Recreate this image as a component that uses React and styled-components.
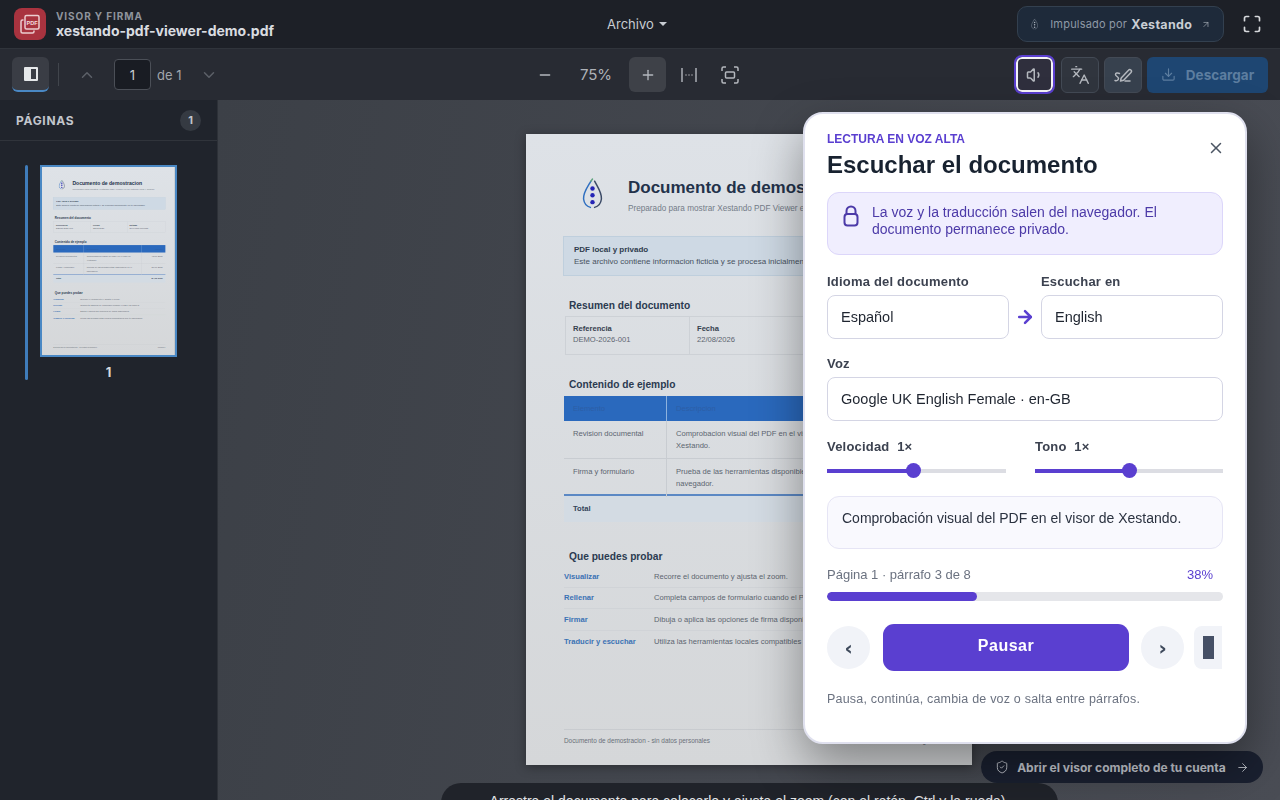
import React from 'react';
import styled, { createGlobalStyle } from 'styled-components';
import { ArrowRight, ArrowUpRight, ChevronDown, ChevronUp, Download, Languages, Maximize, Minus, Plus, ShieldCheck, Volume1, X } from 'lucide-react';

const GlobalStyle = createGlobalStyle`
    html, body { margin: 0; padding: 0; height: 100%; }
    body { font-family: Inter, "Liberation Sans", sans-serif; background: #3e4249; overflow: hidden; }
    * { box-sizing: border-box; }
`;

const Shell = styled.div`
    position: relative;
    width: 100%;
    height: 800px;
    display: flex;
    flex-direction: column;
    overflow: hidden;
`;

const Header = styled.header`
    height: 48px;
    flex: none;
    display: flex;
    align-items: center;
    justify-content: space-between;
    padding: 0 16px 0 14px;
    background: #1d2027;
    position: relative;
`;

const Brand = styled.div`
    display: flex;
    align-items: center;
    gap: 10px;
`;

const BrandIcon = styled.div`
    width: 32px;
    height: 32px;
    border-radius: 8px;
    background: #a9333f;
    display: flex;
    align-items: center;
    justify-content: center;
`;

const BrandText = styled.div`
    display: flex;
    flex-direction: column;
`;

const BrandKicker = styled.span`
    font-size: 10px;
    line-height: 13px;
    font-weight: 700;
    letter-spacing: 0.9px;
    color: #8f949c;
`;

const BrandName = styled.span`
    font-size: 14px;
    line-height: 16px;
    font-weight: 700;
    color: #d9dce0;
`;

const FileMenu = styled.div`
    position: absolute;
    left: 607px;
    top: 16px;
    display: flex;
    align-items: center;
    gap: 5px;
    font-size: 13px;
    line-height: 16px;
    color: #c8ccd2;
`;

const Caret = styled.span`
    width: 0;
    height: 0;
    border-left: 4px solid transparent;
    border-right: 4px solid transparent;
    border-top: 4px solid #c8ccd2;
`;

const HeaderRight = styled.div`
    display: flex;
    align-items: center;
    gap: 16px;
`;

const PoweredBy = styled.div`
    width: 207px;
    height: 36px;
    display: flex;
    align-items: center;
    padding: 0 12px 0 13px;
    border: 1px solid #33404f;
    border-radius: 10px;
    background: #1e2a3a;
    color: #8e99a6;
    font-size: 11px;
    letter-spacing: 0.2px;
`;

const PoweredLabel = styled.span`
    margin-left: 12px;
    white-space: nowrap;
`;

const PoweredName = styled.strong`
    margin-left: 4px;
    margin-right: 9px;
    font-size: 12.5px;
    letter-spacing: 0.3px;
    color: #c9ced4;
`;

const IconSlot = styled.div`
    width: ${(p) => p.$w || 24}px;
    height: 24px;
    display: flex;
    align-items: center;
    justify-content: center;
    color: ${(p) => p.$color || '#b4b8be'};
    flex: none;
`;

const Toolbar = styled.div`
    height: 52px;
    flex: none;
    display: grid;
    grid-template-columns: 1fr auto 1fr;
    align-items: center;
    padding: 0 12px;
    background: #282b33;
    border-top: 1px solid #30343b;
`;

const ToolLeft = styled.div`
    display: flex;
    align-items: center;
`;

const ToggleButton = styled.div`
    width: 37px;
    height: 35px;
    border-radius: 6px;
    background: #3a3d45;
    border-bottom: 2px solid #4a88c4;
    display: flex;
    align-items: center;
    justify-content: center;
`;

const Separator = styled.div`
    width: 1px;
    height: 23px;
    margin: 0 16px 0 9px;
    background: #41454c;
`;

const PageInput = styled.div`
    width: 37px;
    height: 31px;
    margin: 0 6px 0 15px;
    border: 1px solid #4b4f57;
    border-radius: 4px;
    background: #191c23;
    color: #c8ccd2;
    font-size: 13px;
    display: flex;
    align-items: center;
    justify-content: center;
`;

const PageOf = styled.span`
    width: 26px;
    margin-right: 14px;
    font-size: 13px;
    color: #a2a6ad;
    white-space: nowrap;
`;

const ZoomGroup = styled.div`
    display: flex;
    align-items: center;
    margin-left: -6px;
`;

const ZoomValue = styled.span`
    width: 66px;
    text-align: center;
    font-size: 15px;
    color: #aeb2b8;
`;

const ZoomButton = styled.div`
    width: 37px;
    height: 35px;
    border-radius: 6px;
    background: ${(p) => (p.$active ? '#3e4148' : 'transparent')};
    color: #b4b8be;
    display: flex;
    align-items: center;
    justify-content: center;
    margin-right: ${(p) => p.$gap || 0}px;
`;

const ToolRight = styled.div`
    display: flex;
    align-items: center;
    justify-content: flex-end;
    gap: 5px;
`;

const ToolButton = styled.div`
    width: 38px;
    height: 36px;
    border: 1px solid #434a55;
    border-radius: 6px;
    background: ${(p) => p.$bg || '#30353e'};
    color: #b4b8be;
    display: flex;
    align-items: center;
    justify-content: center;
`;

const SpeakButton = styled(ToolButton)`
    width: 37px;
    height: 35px;
    margin: 0 3px 0 0;
    border: 2px solid #f4f4f6;
    border-radius: 6px;
    outline: 2px solid #5a3fd0;
    background: #2f2f3d;
`;

const DownloadButton = styled.div`
    width: 121px;
    height: 36px;
    border-radius: 6px;
    background: #1e4672;
    color: #5d7ea0;
    display: flex;
    align-items: center;
    justify-content: center;
    gap: 10px;
    font-size: 13.5px;
    font-weight: 700;
`;

const Body = styled.div`
    flex: 1;
    min-height: 0;
    display: flex;
`;

const Sidebar = styled.aside`
    width: 218px;
    flex: none;
    background: #20242c;
    border-right: 1px solid #2d3138;
`;

const SidebarHead = styled.div`
    height: 41px;
    padding: 0 16px;
    display: flex;
    align-items: center;
    justify-content: space-between;
    border-bottom: 1px solid #30343b;
`;

const SidebarTitle = styled.span`
    font-size: 12px;
    font-weight: 700;
    letter-spacing: 0.7px;
    color: #c2c6cc;
`;

const Badge = styled.span`
    width: 21px;
    height: 21px;
    border-radius: 50%;
    background: #353a42;
    color: #c2c6cc;
    font-size: 11px;
    font-weight: 700;
    display: flex;
    align-items: center;
    justify-content: center;
`;

const ThumbRow = styled.div`
    display: flex;
    gap: 12px;
    padding: 24px 0 0 25px;
`;

const ThumbBar = styled.div`
    width: 3px;
    height: 215px;
    border-radius: 2px;
    background: #3f7cba;
`;

const ThumbColumn = styled.div`
    width: 137px;
    display: flex;
    flex-direction: column;
    align-items: center;
`;

const ThumbFrame = styled.div`
    width: 137px;
    height: 192px;
    border: 2px solid #4a88c4;
    overflow: hidden;
`;

const ThumbScale = styled.div`
    transform: scale(0.298);
    transform-origin: top left;
    width: 446px;
    height: 631px;
`;

const ThumbLabel = styled.span`
    margin-top: 7px;
    font-size: 13px;
    line-height: 16px;
    font-weight: 700;
    color: #d5d8dc;
`;

const Viewer = styled.main`
    flex: 1;
    min-width: 0;
    display: flex;
    justify-content: center;
    padding-top: 34px;
    background: linear-gradient(100deg, #3c4047, #4a4d55);
`;

const Sheet = styled.div`
    width: 446px;
    height: 631px;
    flex: none;
    display: flex;
    flex-direction: column;
    padding: 44px 32px 0 38px;
    background: linear-gradient(180deg, #dee2e7, #d5d7d9);
    box-shadow: 0 2px 10px rgba(0, 0, 0, 0.35);
    font-family: "Liberation Sans", Arial, sans-serif;
    color: #5c6570;
`;

const SheetHead = styled.div`
    display: flex;
    align-items: flex-start;
    padding-left: 18px;
    gap: 25px;
`;

const SheetTitle = styled.div`
    font-size: 17px;
    line-height: 20px;
    font-weight: 700;
    color: #23324a;
    white-space: nowrap;
`;

const SheetSub = styled.div`
    margin-top: 5px;
    font-size: 8.2px;
    line-height: 12px;
    color: #747c88;
    white-space: nowrap;
`;

const InfoBox = styled.div`
    height: 40px;
    margin: 21px 0 0 -1px;
    padding: 7px 10px;
    border: 1px solid #bfcfdd;
    background: #ced9e4;
    font-size: 8px;
    line-height: 12px;
    white-space: nowrap;
    overflow: hidden;
    color: #47525f;
`;

const InfoTitle = styled.div`
    font-weight: 700;
    color: #2f3c4e;
`;

const SectionTitle = styled.div`
    margin-top: ${(p) => p.$top}px;
    padding-left: 5px;
    font-size: 10.2px;
    line-height: 14px;
    font-weight: 700;
    color: #2b3a50;
`;

const SummaryGrid = styled.div`
    display: grid;
    grid-template-columns: 123px 123px 1fr;
    height: 39px;
    margin: 3px 0 0 1px;
    border: 1px solid #cdd1d6;
`;

const SummaryCell = styled.div`
    padding: 6px 7px;
    border-left: ${(p) => (p.$first ? 'none' : '1px solid #cdd1d6')};
    font-size: 7.6px;
    line-height: 11px;
`;

const SummaryKey = styled.div`
    font-weight: 700;
    color: #36414f;
`;

const DataTable = styled.div`
    margin-top: 4px;
    font-size: 7.6px;
    line-height: 12px;
`;

const TableRow = styled.div`
    display: grid;
    grid-template-columns: 102px 194px 1fr;
    height: ${(p) => p.$h}px;
    background: ${(p) => p.$bg || 'transparent'};
    border-bottom: ${(p) => p.$rule || '1px solid #c8ccd1'};
    color: ${(p) => p.$color || 'inherit'};
    font-weight: ${(p) => (p.$bold ? 700 : 400)};
`;

const TableCell = styled.div`
    padding: ${(p) => (p.$thin ? '7px 8px' : '7px 9px')};
    border-left: ${(p) => (p.$line ? `1px solid ${p.$line}` : 'none')};
    text-align: ${(p) => (p.$end ? 'right' : 'left')};
`;

const TryList = styled.div`
    margin-top: 2px;
`;

const TryRow = styled.div`
    display: grid;
    grid-template-columns: 90px 1fr;
    align-items: center;
    height: 21.6px;
    border-bottom: ${(p) => (p.$last ? 'none' : '1px solid #d0d3d7')};
    font-size: 7.6px;
    white-space: nowrap;
`;

const TryKey = styled.span`
    font-weight: 700;
    color: #3b72b4;
`;

const SheetFoot = styled.div`
    margin-top: auto;
    height: 36px;
    display: flex;
    justify-content: space-between;
    padding-top: 6px;
    border-top: 1px solid #c8cbcf;
    font-size: 6.4px;
    line-height: 10px;
    color: #6a7079;
`;

const Veil = styled.div`
    position: absolute;
    inset: 0;
    backdrop-filter: blur(0.7px);
`;

const Panel = styled.section`
    position: absolute;
    top: 112px;
    left: 803px;
    width: 444px;
    height: 632px;
    padding: 17px 22px 0;
    border: 2px solid #dfe0ee;
    border-radius: 20px;
    background: #ffffff;
    box-shadow: 0 20px 50px rgba(0, 0, 0, 0.4);
    font-family: "Liberation Sans", Arial, sans-serif;
`;

const CloseButton = styled.div`
    position: absolute;
    top: 25px;
    right: 20px;
    color: #4b5563;
    display: flex;
`;

const Eyebrow = styled.div`
    font-size: 12px;
    line-height: 16px;
    font-weight: 700;
    color: #5a3fd0;
`;

const PanelTitle = styled.h2`
    margin: 4px 0 0;
    font-size: 24px;
    line-height: 28px;
    font-weight: 700;
    color: #182230;
`;

const Notice = styled.div`
    display: flex;
    gap: 13px;
    height: 63px;
    margin-top: 13px;
    padding: 11px 15px;
    border: 1px solid #dcd6fa;
    border-radius: 12px;
    background: #f0eefe;
    color: #4c3aa8;
    font-size: 14px;
    line-height: 17px;
`;

const FieldRow = styled.div`
    display: grid;
    grid-template-columns: 182px 32px 182px;
    margin-top: 19px;
`;

const Field = styled.div`
    display: flex;
    flex-direction: column;
    margin-top: ${(p) => p.$top || 0}px;
`;

const FieldLabel = styled.label`
    height: 16px;
    margin-bottom: 5px;
    font-size: 13px;
    line-height: 16px;
    font-weight: 700;
    letter-spacing: 0.2px;
    color: #3c4250;
`;

const Select = styled.select`
    appearance: none;
    height: ${(p) => p.$h || 44}px;
    padding: 0 13px;
    border: 1px solid #d4d5e4;
    border-radius: 8px;
    background: #ffffff;
    color: #1f2530;
    font-family: inherit;
    font-size: 14.5px;
    opacity: 1;
`;

const FieldArrow = styled.div`
    align-self: end;
    height: 44px;
    display: flex;
    align-items: center;
    justify-content: center;
    color: #5a3fd0;
`;

const Sliders = styled.div`
    display: grid;
    grid-template-columns: 179px 188px;
    column-gap: 29px;
    margin-top: 18px;
`;

const SliderLabel = styled.div`
    height: 16px;
    font-size: 13px;
    line-height: 16px;
    font-weight: 700;
    letter-spacing: 0.2px;
    color: #3c4250;
    white-space: pre;
`;

const Track = styled.div`
    position: relative;
    height: 4px;
    margin-top: 14px;
    background: #dcdde3;
`;

const TrackFill = styled.div`
    height: 100%;
    background: #5a3fd0;
`;

const Thumb = styled.div`
    position: absolute;
    top: -6px;
    width: 15px;
    height: 15px;
    margin-left: -7.5px;
    border-radius: 50%;
    background: #5a3fd0;
`;

const ReadingBox = styled.div`
    height: 53px;
    margin-top: 23px;
    padding: 13px 14px;
    border: 1px solid #e6e5f5;
    border-radius: 12px;
    background: #f9f9fe;
    color: #2b3240;
    font-size: 14px;
    line-height: 17px;
`;

const ProgressLabels = styled.div`
    display: flex;
    justify-content: space-between;
    height: 16px;
    margin-top: 18px;
    padding-right: 10px;
    font-size: 13px;
    line-height: 16px;
    color: #6b7280;
`;

const ProgressPercent = styled.span`
    color: #5a3fd0;
    font-weight: 400;
`;

const ProgressTrack = styled.div`
    height: 9px;
    margin-top: 9px;
    border-radius: 5px;
    background: #e5e6ea;
    overflow: hidden;
`;

const ProgressFill = styled.div`
    height: 100%;
    border-radius: 5px;
    background: #5a3fd0;
`;

const Controls = styled.div`
    display: flex;
    align-items: center;
    margin-top: 23px;
`;

const RoundButton = styled.div`
    width: 43px;
    height: 43px;
    flex: none;
    border-radius: 50%;
    background: #f1f3f8;
    color: #3f4a5c;
    font-family: "DejaVu Sans", sans-serif;
    font-size: 20px;
    font-weight: 700;
    display: flex;
    align-items: center;
    justify-content: center;
`;

const PauseButton = styled.div`
    width: 246px;
    height: 47px;
    margin: 0 12px 0 13px;
    padding-bottom: 3px;
    flex: none;
    border-radius: 11px;
    background: #5a3fd0;
    color: #ffffff;
    font-size: 16px;
    font-weight: 700;
    letter-spacing: 0.5px;
    display: flex;
    align-items: center;
    justify-content: center;
`;

const StopButton = styled.div`
    width: 28px;
    height: 43px;
    margin-left: 10px;
    flex: none;
    border-radius: 8px 0 0 8px;
    background: #f1f3f8;
    display: flex;
    align-items: center;
    justify-content: center;
`;

const StopGlyph = styled.span`
    width: 11px;
    height: 23px;
    background: #465066;
`;

const PanelHint = styled.div`
    margin-top: 20px;
    font-size: 12.5px;
    line-height: 16px;
    letter-spacing: 0.2px;
    color: #6b7280;
`;

const AccountLink = styled.div`
    position: absolute;
    left: 981px;
    top: 751px;
    width: 282px;
    height: 32px;
    padding: 0 14px;
    border-radius: 16px;
    background: #1a2030;
    color: #c3c7ce;
    display: flex;
    align-items: center;
    gap: 8px;
    font-size: 12px;
    font-weight: 700;
    white-space: nowrap;
`;

const DragHint = styled.div`
    position: absolute;
    left: 441px;
    top: 783px;
    width: 617px;
    padding: 9px 24px;
    border-radius: 20px;
    background: #20232a;
    color: #e3e5e8;
    font-family: "Liberation Sans", Arial, sans-serif;
    font-size: 14px;
    line-height: 18px;
    text-align: center;
`;

const DropLogo = ({ size, dots, left, right, top }) => (
    <svg width={size} height={size * 1.5} viewBox="0 0 20 30" fill="none" strokeLinecap="round">
        <path d="M8.5 3 C5 9 1 14 1.5 20 C2 24 4 27 8 28" stroke={left} strokeWidth="1.4" />
        <path d="M12 3 C15 9 19 14 18.5 20 C18 24 16 27 12 28" stroke={right} strokeWidth="1.4" />
        <path d="M8.5 3 L10 1" stroke={top} strokeWidth="1.4" />
        <circle cx="10" cy="10" r="2.1" fill={dots} />
        <circle cx="10" cy="16.5" r="2.1" fill={dots} />
        <circle cx="10" cy="23" r="2.1" fill={dots} />
    </svg>
);

const PdfStackIcon = () => (
    <svg width="22" height="22" viewBox="0 0 22 22" fill="none">
        <path d="M4.5 7 H3.5 A1.5 1.5 0 0 0 2 8.5 V18.5 A1.5 1.5 0 0 0 3.5 20 H13.5 A1.5 1.5 0 0 0 15 18.5 V17.5" stroke="#eccdd0" strokeWidth="1.5" />
        <rect x="6" y="2.5" width="14" height="13.5" rx="1.5" stroke="#eccdd0" strokeWidth="1.5" />
        <text x="13" y="11.5" textAnchor="middle" fontFamily="Liberation Sans" fontSize="5.6" fontWeight="700" fill="#f2dcde">PDF</text>
    </svg>
);

const PanelToggleIcon = () => (
    <svg width="16" height="16" viewBox="0 0 16 16">
        <path fillRule="evenodd" fill="#e6e8ea" d="M2 1 H14 A1 1 0 0 1 15 2 V14 A1 1 0 0 1 14 15 H2 A1 1 0 0 1 1 14 V2 A1 1 0 0 1 2 1 Z M8 3 V13 H13 V3 Z" />
    </svg>
);

const FitWidthIcon = () => (
    <svg width="18" height="18" viewBox="0 0 18 18" fill="none" stroke="#b4b8be" strokeWidth="1.4">
        <path d="M2 2 V16 M16 2 V16" />
        <path d="M5.5 9 H6.5 M8.5 9 H9.5 M11.5 9 H12.5" />
    </svg>
);

const FitPageIcon = () => (
    <svg width="20" height="20" viewBox="0 0 20 20" fill="none" stroke="#b4b8be" strokeWidth="1.5">
        <path d="M2 6 V3.5 A1.5 1.5 0 0 1 3.5 2 H6 M14 2 H16.5 A1.5 1.5 0 0 1 18 3.5 V6 M18 14 V16.5 A1.5 1.5 0 0 1 16.5 18 H14 M6 18 H3.5 A1.5 1.5 0 0 1 2 16.5 V14" />
        <rect x="5.5" y="7" width="9" height="6" rx="1" />
    </svg>
);

const SignIcon = () => (
    <svg width="20" height="20" viewBox="0 0 20 20" fill="none" stroke="#b4b8be" strokeWidth="1.5" strokeLinecap="round" strokeLinejoin="round">
        <path d="M2 15.5 C3.5 16 5.5 15.5 5.5 13.5 C5.5 11.5 2.5 11.5 2.5 9.5 C2.5 8 4.5 7.5 6.5 8.5" />
        <path d="M7.5 16 L8.2 13 L15.5 5.2 A1.6 1.6 0 0 1 18 7.4 L10.6 15.2 Z" />
        <path d="M12 16 H17" />
    </svg>
);

const LockIcon = () => (
    <svg width="16" height="22" viewBox="0 0 16 22" fill="none" stroke="#4c3aa8" strokeWidth="2" style={{ flex: 'none', marginTop: 1 }}>
        <rect x="1.5" y="9" width="13" height="11.5" rx="3" />
        <path d="M3.5 9 V6 A4.5 4.5 0 0 1 12.5 6 V9" />
    </svg>
);

const DocumentSheet = () => (
    <Sheet>
        <SheetHead>
            <DropLogo size={21} dots="#2525b5" left="#2f6fc0" right="#3b4a66" top="#5ea37c" />
            <div>
                <SheetTitle>Documento de demostracion</SheetTitle>
                <SheetSub>Preparado para mostrar Xestando PDF Viewer en un entorno local y seguro</SheetSub>
            </div>
        </SheetHead>
        <InfoBox>
            <InfoTitle>PDF local y privado</InfoTitle>
            Este archivo contiene informacion ficticia y se procesa inicialmente en tu navegador.
        </InfoBox>
        <SectionTitle $top={23}>Resumen del documento</SectionTitle>
        <SummaryGrid>
            <SummaryCell $first>
                <SummaryKey>Referencia</SummaryKey>
                DEMO-2026-001
            </SummaryCell>
            <SummaryCell>
                <SummaryKey>Fecha</SummaryKey>
                22/08/2026
            </SummaryCell>
            <SummaryCell>
                <SummaryKey>Estado</SummaryKey>
                Solo para pruebas
            </SummaryCell>
        </SummaryGrid>
        <SectionTitle $top={23}>Contenido de ejemplo</SectionTitle>
        <DataTable>
            <TableRow $h={25} $bg="#2a69bd" $color="#2c5ea6" $rule="none">
                <TableCell>Elemento</TableCell>
                <TableCell $line="#8db2de">Descripcion</TableCell>
                <TableCell $line="#8db2de" $end>Importe</TableCell>
            </TableRow>
            <TableRow $h={38}>
                <TableCell>Revision documental</TableCell>
                <TableCell $line="#c8ccd1">Comprobacion visual del PDF en el visor de Xestando.</TableCell>
                <TableCell $line="#c8ccd1" $end>48,00 EUR</TableCell>
            </TableRow>
            <TableRow $h={37} $rule="2px solid #5b88c4">
                <TableCell>Firma y formulario</TableCell>
                <TableCell $line="#c8ccd1">Prueba de las herramientas disponibles en el navegador.</TableCell>
                <TableCell $line="#c8ccd1" $end>36,00 EUR</TableCell>
            </TableRow>
            <TableRow $h={26} $bg="#d3dbe3" $color="#35445a" $rule="none" $bold>
                <TableCell>Total</TableCell>
                <TableCell />
                <TableCell $end>84,00 EUR</TableCell>
            </TableRow>
        </DataTable>
        <SectionTitle $top={28}>Que puedes probar</SectionTitle>
        <TryList>
            <TryRow><TryKey>Visualizar</TryKey>Recorre el documento y ajusta el zoom.</TryRow>
            <TryRow><TryKey>Rellenar</TryKey>Completa campos de formulario cuando el PDF los incluya.</TryRow>
            <TryRow><TryKey>Firmar</TryKey>Dibuja o aplica las opciones de firma disponibles.</TryRow>
            <TryRow $last><TryKey>Traducir y escuchar</TryKey>Utiliza las herramientas locales compatibles con tu navegador.</TryRow>
        </TryList>
        <SheetFoot>
            <span>Documento de demostracion - sin datos personales</span>
            <span>Pagina 1</span>
        </SheetFoot>
    </Sheet>
);

const Slider = ({ label, value, percent }) => (
    <div>
        <SliderLabel>{label}  {value}</SliderLabel>
        <Track>
            <TrackFill style={{ width: `${percent}%` }} />
            <Thumb style={{ left: `${percent}%` }} />
        </Track>
    </div>
);

const App = () => {
    return (
        <Shell>
            <GlobalStyle />
            <Header>
                <Brand>
                    <BrandIcon><PdfStackIcon /></BrandIcon>
                    <BrandText>
                        <BrandKicker>VISOR Y FIRMA</BrandKicker>
                        <BrandName>xestando-pdf-viewer-demo.pdf</BrandName>
                    </BrandText>
                </Brand>
                <FileMenu>Archivo <Caret /></FileMenu>
                <HeaderRight>
                    <PoweredBy>
                        <DropLogo size={11} dots="#aab2bc" left="#7f8a97" right="#7f8a97" top="#7f8a97" />
                        <PoweredLabel>Impulsado por</PoweredLabel>
                        <PoweredName>Xestando</PoweredName>
                        <ArrowUpRight size={15} strokeWidth={1.5} color="#b4bac2" />
                    </PoweredBy>
                    <IconSlot $color="#d6d8db"><Maximize size={20} strokeWidth={2} /></IconSlot>
                </HeaderRight>
            </Header>
            <Toolbar>
                <ToolLeft>
                    <ToggleButton><PanelToggleIcon /></ToggleButton>
                    <Separator />
                    <IconSlot $color="#5c6068"><ChevronUp size={18} /></IconSlot>
                    <PageInput>1</PageInput>
                    <PageOf>de 1</PageOf>
                    <IconSlot $color="#5c6068"><ChevronDown size={18} /></IconSlot>
                </ToolLeft>
                <ZoomGroup>
                    <IconSlot $w={37}><Minus size={16} /></IconSlot>
                    <ZoomValue>75%</ZoomValue>
                    <ZoomButton $active $gap={4}><Plus size={16} /></ZoomButton>
                    <ZoomButton $gap={4}><FitWidthIcon /></ZoomButton>
                    <ZoomButton><FitPageIcon /></ZoomButton>
                </ZoomGroup>
                <ToolRight>
                    <SpeakButton><Volume1 size={18} /></SpeakButton>
                    <ToolButton><Languages size={20} strokeWidth={1.6} /></ToolButton>
                    <ToolButton $bg="#37414e"><SignIcon /></ToolButton>
                    <DownloadButton>
                        <Download size={15} strokeWidth={1.8} />
                        Descargar
                    </DownloadButton>
                </ToolRight>
            </Toolbar>
            <Body>
                <Sidebar>
                    <SidebarHead>
                        <SidebarTitle>PÁGINAS</SidebarTitle>
                        <Badge>1</Badge>
                    </SidebarHead>
                    <ThumbRow>
                        <ThumbBar />
                        <ThumbColumn>
                            <ThumbFrame>
                                <ThumbScale><DocumentSheet /></ThumbScale>
                            </ThumbFrame>
                            <ThumbLabel>1</ThumbLabel>
                        </ThumbColumn>
                    </ThumbRow>
                </Sidebar>
                <Viewer>
                    <DocumentSheet />
                </Viewer>
            </Body>
            <Veil />
            <DragHint>
                Arrastra el documento para colocarlo y ajusta el zoom (con el ratón, Ctrl y la rueda). Cuando lo necesites, usa los controles de la barra.
            </DragHint>
            <AccountLink>
                <ShieldCheck size={16} strokeWidth={1.6} />
                Abrir el visor completo de tu cuenta
                <ArrowRight size={15} strokeWidth={1.6} style={{ marginLeft: 2 }} />
            </AccountLink>
            <Panel>
                <CloseButton><X size={18} strokeWidth={2} /></CloseButton>
                <Eyebrow>LECTURA EN VOZ ALTA</Eyebrow>
                <PanelTitle>Escuchar el documento</PanelTitle>
                <Notice>
                    <LockIcon />
                    <span>La voz y la traducción salen del navegador. El documento permanece privado.</span>
                </Notice>
                <FieldRow>
                    <Field>
                        <FieldLabel>Idioma del documento</FieldLabel>
                        <Select defaultValue="es"><option value="es">Español</option></Select>
                    </Field>
                    <FieldArrow><ArrowRight size={20} strokeWidth={3} /></FieldArrow>
                    <Field>
                        <FieldLabel>Escuchar en</FieldLabel>
                        <Select defaultValue="en"><option value="en">English</option></Select>
                    </Field>
                </FieldRow>
                <Field $top={17}>
                    <FieldLabel>Voz</FieldLabel>
                    <Select defaultValue="uk"><option value="uk">Google UK English Female · en-GB</option></Select>
                </Field>
                <Sliders>
                    <Slider label="Velocidad" value="1×" percent={48.6} />
                    <Slider label="Tono" value="1×" percent={50} />
                </Sliders>
                <ReadingBox>Comprobación visual del PDF en el visor de Xestando.</ReadingBox>
                <ProgressLabels>
                    <span>Página 1 · párrafo 3 de 8</span>
                    <ProgressPercent>38%</ProgressPercent>
                </ProgressLabels>
                <ProgressTrack><ProgressFill style={{ width: '38%' }} /></ProgressTrack>
                <Controls>
                    <RoundButton>‹</RoundButton>
                    <PauseButton>Pausar</PauseButton>
                    <RoundButton>›</RoundButton>
                    <StopButton><StopGlyph /></StopButton>
                </Controls>
                <PanelHint>Pausa, continúa, cambia de voz o salta entre párrafos.</PanelHint>
            </Panel>
        </Shell>
    );
};

export default App;
